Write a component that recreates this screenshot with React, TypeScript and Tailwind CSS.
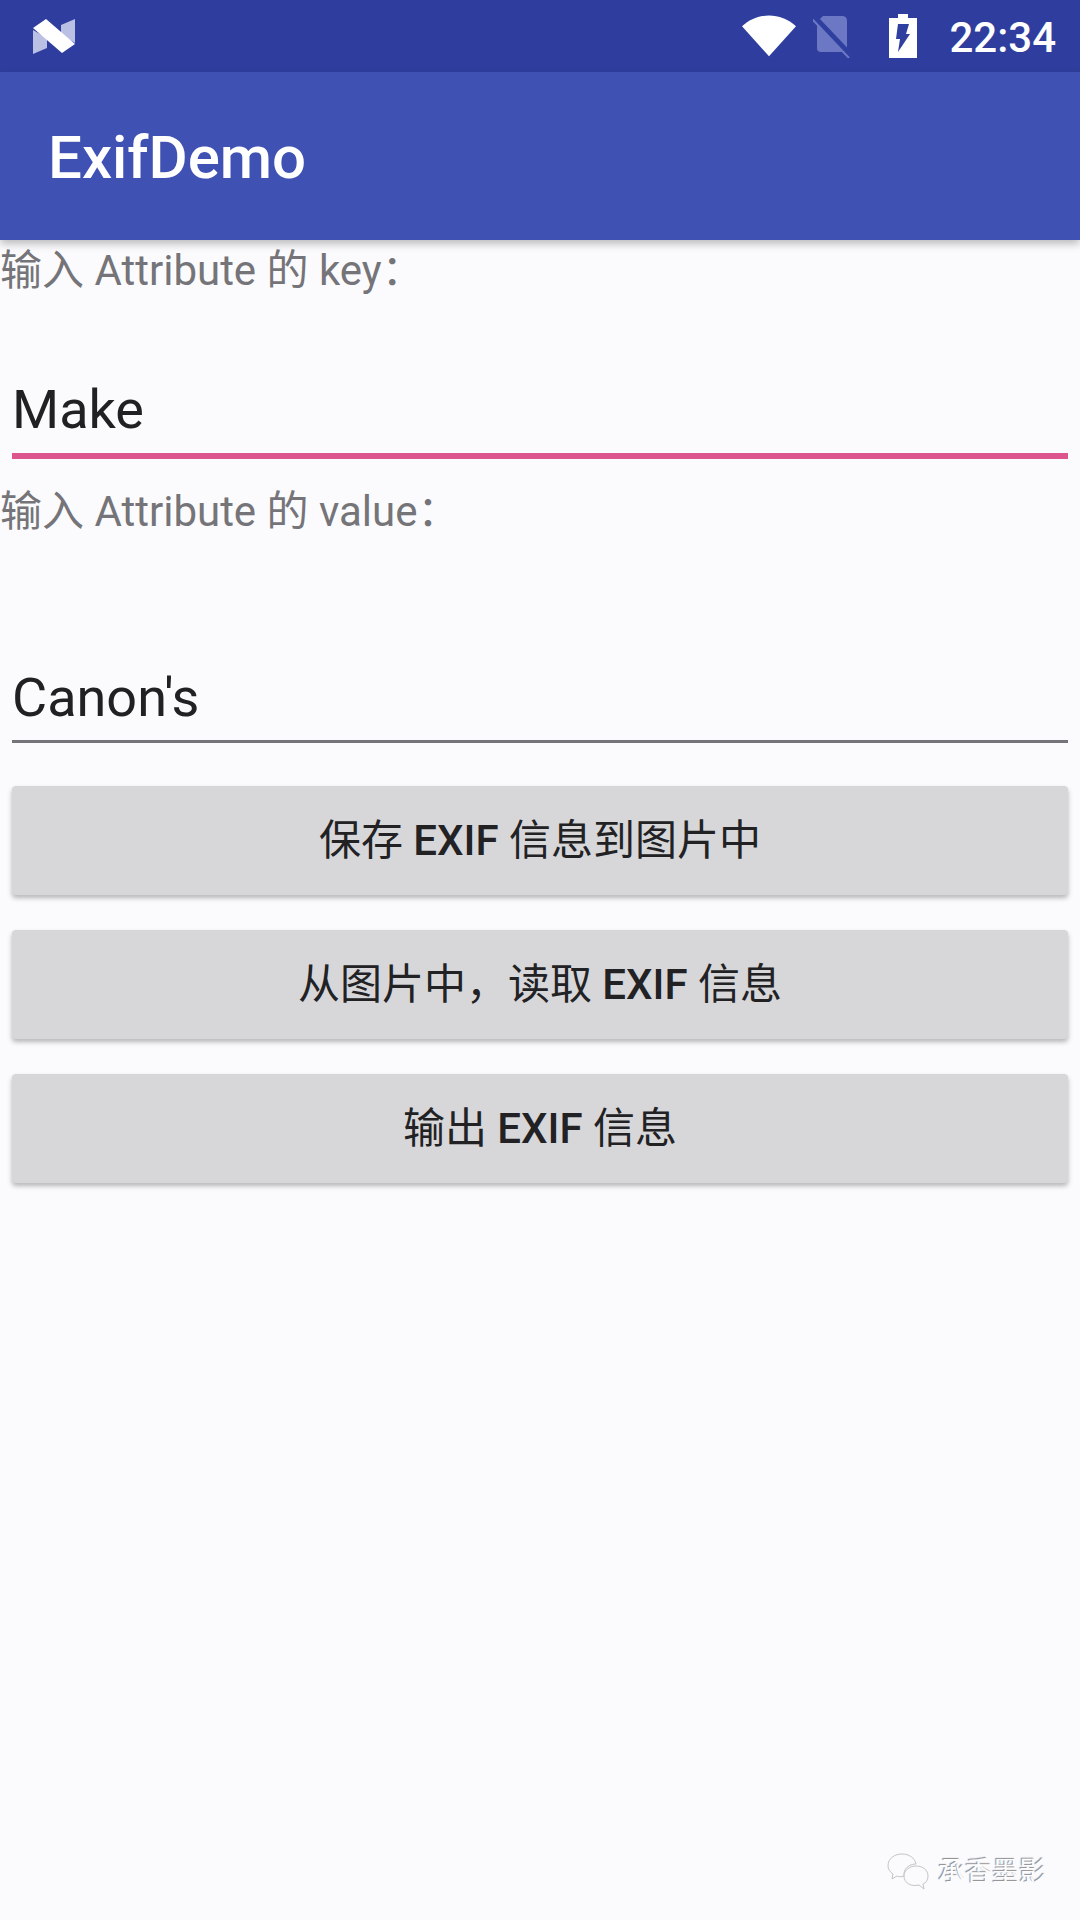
import React from 'react';

const FONT = "font-['Roboto','Noto_Sans_CJK_SC',sans-serif]";

const NLogo = () => (
    <svg width="44" height="37" viewBox="0 0 44 37">
        <path d="M1 12 L15 20 L15 30 L1 36 Z" fill="#b9c0e4" />
        <path d="M43 1 L29 7 L29 17 L43 25 Z" fill="#b9c0e4" />
        <path d="M1 10 L14 1 L43 26 L30 35 Z" fill="#ffffff" />
    </svg>
);

const StatusIcons = () => (
    <div className="flex items-center">
        <svg width="54" height="44" viewBox="0 0 56 44" className="mr-[17px]">
            <path d="M0 12 C16 -3 40 -3 56 12 L28 43 Z" fill="#ffffff" />
        </svg>
        <svg width="40" height="44" viewBox="0 0 40 44" className="mr-[36px]">
            <path d="M10 2 L29 2 Q34 2 34 7 L34 38 L8 38 Q4 38 4 34 L4 8 Z" fill="#6d78c4" />
            <path d="M1 3 L38 42" stroke="#2f3f9f" strokeWidth="6" />
            <path d="M1 3 L38 42" stroke="#6d78c4" strokeWidth="2" transform="translate(-2 2)" />
        </svg>
        <svg width="28" height="44" viewBox="0 0 28 44" className="mr-[32px]">
            <path d="M9 0 H19 V4 H28 V44 H0 V4 H9 Z" fill="#ffffff" />
            <path d="M9 10 H20 L17 20 H21 L9 38 L11 25 H7 Z" fill="#2f3f9f" />
        </svg>
    </div>
);

const Field = ({ label, value, className, lineClass }: { label: string; value: string; className: string; lineClass: string }) => (
    <div>
        <div className="text-[42px] leading-[50px] text-[#757478] whitespace-pre">{label}</div>
        <div className={`mx-3 text-[54px] leading-[64px] text-[#212124] ${className}`}>{value}</div>
        <div className={`mx-3 ${lineClass}`} />
    </div>
);

const ActionButton = ({ before, after }: { before: string; after: string }) => (
    <button className="mx-3 h-[109px] rounded-[4px] bg-[#d7d7d9] text-[42px] text-[#222225] shadow-[0_3px_5px_rgba(0,0,0,0.28)] whitespace-pre flex items-center justify-center">
        {before}<span className="font-medium">EXIF</span>{after}
    </button>
);

const Watermark = () => (
    <div className="absolute right-[34px] bottom-[28px] flex items-center gap-[8px]">
        <svg width="44" height="40" viewBox="0 0 44 40" fill="#fbfbfd" stroke="#c4c4c8" strokeWidth="1">
            <path d="M2 14 C2 6 9 2 16 2 C23 2 29 6 30 12 C23 12 17 17 18 24 C15 25 13 25 11 24 L6 27 L7 22 C4 20 2 17 2 14 Z" />
            <path d="M18 24 C18 18 24 14 30 14 C37 14 42 18 42 24 C42 28 40 31 37 32 L38 37 L33 33 C25 35 18 31 18 24 Z" />
        </svg>
        <span className="text-[27px] leading-[36px] text-[#fdfdfe] [text-shadow:-1px_-1px_1px_#8a8a8e]">承香墨影</span>
    </div>
);

export default function App() {
    return (
        <div className={`relative w-[1080px] h-[1920px] overflow-hidden bg-[#fbfbfe] ${FONT}`}>
            <div className="h-[72px] bg-[#2f3e9e] flex items-center justify-between pl-[32px] pr-[24px]">
                <NLogo />
                <div className="flex items-center">
                    <StatusIcons />
                    <span className="text-[42px] font-medium text-white pt-[2px]">22:34</span>
                </div>
            </div>
            <div className="relative h-[168px] bg-[#3f51b3] shadow-[0_4px_8px_rgba(0,0,0,0.25)] flex items-center pl-[48px]">
                <span className="text-[60px] font-medium text-white pt-[4px]">ExifDemo</span>
            </div>

            <div className="flex flex-col">
                <div className="pt-[6px]">
                    <Field label="输入 Attribute 的 key：" value="Make" className="mt-[82px]" lineClass="mt-[11px] h-[6px] bg-[#dc568d]" />
                </div>
                <div className="pt-[28px]">
                    <Field label="输入 Attribute 的 value：" value="Canon's" className="mt-[129px]" lineClass="mt-[10px] h-[3px] bg-[#757478]" />
                </div>
                <div className="flex flex-col gap-[35px] mt-[43px]">
                    <ActionButton before="保存 " after=" 信息到图片中" />
                    <ActionButton before="从图片中，读取 " after=" 信息" />
                    <ActionButton before="输出 " after=" 信息" />
                </div>
            </div>

            <Watermark />
        </div>
    );
}
